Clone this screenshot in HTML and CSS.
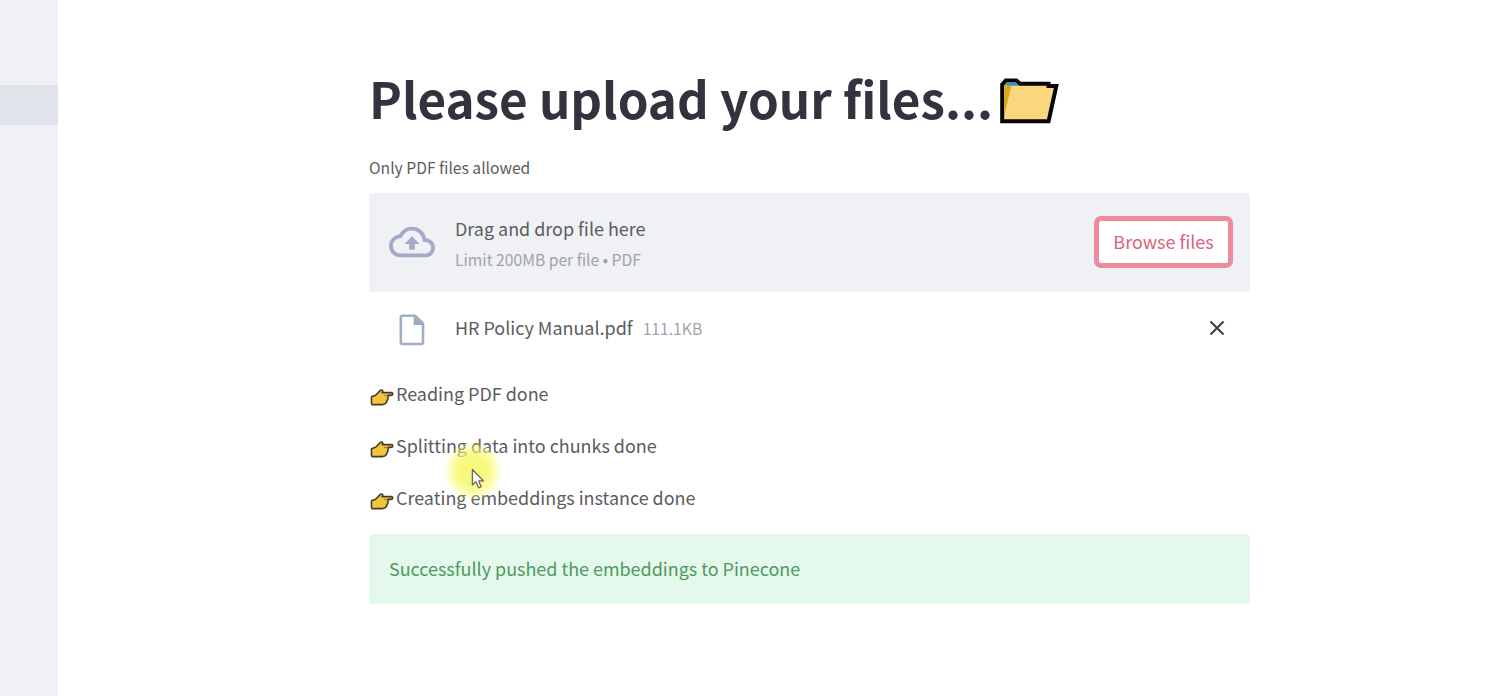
FILE: index.html
```html
<!DOCTYPE html>
<html lang="en">
<head>
<meta charset="utf-8">
<title>Please upload your files...</title>
<link rel="stylesheet" href="styles.css">
</head>
<body>
<svg class="defs" width="0" height="0" aria-hidden="true">
  <symbol id="hand" viewBox="0 0 24 18">
    <path d="M1.5 8.8 L5.6 7.2 L10.4 2.4 Q12.6 1.2 12.8 3.2 L12.2 4.6 H21.4 Q22.9 4.8 22.7 6 Q22.5 7.2 21 7.4 H18 Q18.6 8.8 17.8 10 Q18.2 11.6 17 12.6 Q16.8 15 14.8 15.9 L12.6 16.6 H2.3 L1.5 15.8 Z" fill="#f3c43c" stroke="#443b2b" stroke-width="1.6" stroke-linejoin="round"/>
    <path d="M14 7.6 H17.4" stroke="#8c6a22" stroke-width=".8" fill="none"/>
  </symbol>
</svg>
<aside class="sidebar"><div class="nav-active"></div></aside>
<main class="content">
  <h1 class="title"><span class="title-text">Please upload your files...</span><svg class="folder" width="60" height="48" viewBox="0 0 60 48">
    <path d="M3.2 44.3 V7.6 L6.8 3.6 H17.5 L20.8 6.8 H49.5 V9 H57.3 L49.6 44.3 Z" fill="#fad67c" stroke="#050505" stroke-width="4" stroke-linejoin="miter"/>
    <path d="M7.6 5.2 H17 L18.8 8.8 H6.4 Z" fill="#3b8fc9"/>
    <path d="M5.2 8.8 H12.5 L5.2 38 Z" fill="#dca51d"/>
  </svg></h1>
  <div class="label">Only PDF files allowed</div>
  <section class="dropzone">
    <svg class="cloud" width="46" height="46" viewBox="0 0 24 24"><path fill="#a1abc8" d="M19.35 10.04A7.49 7.49 0 0012 4C9.11 4 6.6 5.64 5.35 8.04A5.994 5.994 0 000 14c0 3.31 2.69 6 6 6h13c2.76 0 5-2.24 5-5 0-2.64-2.05-4.78-4.65-4.96zM19 18H6c-2.21 0-4-1.79-4-4 0-2.05 1.53-3.76 3.56-3.97l1.07-.11.5-.95A5.469 5.469 0 0112 6c2.62 0 4.88 1.86 5.39 4.43l.3 1.5 1.53.11A2.98 2.98 0 0122 15c0 1.65-1.35 3-3 3zM8 13h2.55v3h2.9v-3H16l-4-4z"/></svg>
    <div class="drop-copy">
      <span class="drop-title">Drag and drop file here</span>
      <span class="drop-limit">Limit 200MB per file • PDF</span>
    </div>
    <button class="browse" type="button"><span>Browse files</span></button>
  </section>
  <div class="file">
    <svg class="file-icon" width="26" height="32" viewBox="0 0 26 32"><path d="M3 1.8 H16 L24 9.5 V28.6 Q24 30 22.4 30 H3.4 Q1.8 30 1.8 28.6 V3 Q1.8 1.8 3 1.8 Z" fill="none" stroke="#a1adc6" stroke-width="2.6" stroke-linejoin="round"/><path d="M14.6 2 V11 H24 Z" fill="#9aabc0"/></svg>
    <span class="file-name">HR Policy Manual.pdf</span>
    <span class="file-size">111.1KB</span>
    <svg class="close" width="16" height="16" viewBox="0 0 16 16"><path d="M1.5 1.5 L14.5 14.5 M14.5 1.5 L1.5 14.5" stroke="#404148" stroke-width="2.2"/></svg>
  </div>
  <div class="steps">
    <p class="step"><svg class="hand" width="24" height="18"><use href="#hand"/></svg><span>Reading PDF done</span></p>
    <p class="step"><svg class="hand" width="24" height="18"><use href="#hand"/></svg><span>Splitting data into chunks done</span></p>
    <p class="step"><svg class="hand" width="24" height="18"><use href="#hand"/></svg><span>Creating embeddings instance done</span></p>
  </div>
  <div class="success"><span>Successfully pushed the embeddings to Pinecone</span></div>
</main>
<div class="halo"></div>
<svg class="cursor" width="14" height="22" viewBox="0 0 14 22"><path d="M1.4 1.5 V17 L5 13.8 L7.6 19.8 L10.2 18.7 L7.8 12.9 H12.4 Z" fill="#fff" stroke="#6b6858" stroke-width="1.3" stroke-linejoin="round"/></svg>
</body>
</html>
```
FILE: styles.css
```css
* { box-sizing: border-box; }
body {
  margin: 0;
  height: 696px;
  overflow: hidden;
  display: flex;
  background: #fff;
  color: #5b5c60;
  font-family: "Noto Sans CJK JP", "Open Sans", sans-serif;
  font-size: 17.94px;
  line-height: 26px;
  white-space: nowrap;
}
.defs { display: none; }
svg { display: block; flex: none; }
.sidebar { width: 58px; flex: none; padding-top: 85px; background: #eff1f6; }
.nav-active { height: 40px; background: #e0e3ea; }
.content { width: 881px; margin-left: 311px; padding-top: 66px; }
.title {
  margin: 0;
  height: 70px;
  display: flex;
  align-items: center;
  color: #33333f;
  font-size: 49.35px;
  line-height: 64px;
  font-weight: 700;
}
.title-text { width: 630px; padding-bottom: 6px; }
.label { height: 24px; margin-top: 20px; font-size: 15.65px; line-height: 24px; }
.dropzone {
  height: 99px;
  margin-top: 13px;
  padding: 0 17px 0 20px;
  display: flex;
  align-items: center;
  background: #eff1f5;
  border-radius: 4px;
}
.cloud { margin-bottom: 2px; }
.drop-copy { display: flex; flex-direction: column; gap: 6px; margin-left: 20px; padding-top: 3px; }
.drop-limit { color: #a0a2a7; font-size: 15.68px; }
.browse {
  width: 139px;
  height: 52px;
  margin: 0 0 2px auto;
  padding: 0 0 2px;
  border: 5px solid #eb8b9b;
  border-radius: 7px;
  background: #fff;
  color: #d8647b;
  font: inherit;
}
.file { height: 72px; padding: 0 25px 0 30px; display: flex; align-items: center; }
.file-icon { margin-top: 4px; }
.file-name { margin-left: 30px; padding-bottom: 2px; }
.file-size { margin-left: 10px; padding-top: 1px; color: #a4a5aa; font-size: 15.7px; }
.close { margin-left: auto; }
.steps { display: flex; flex-direction: column; gap: 26px; padding-top: 17px; }
.step { height: 26px; margin: 0; display: flex; align-items: center; gap: 2px; padding-left: 1px; }
.step span { padding-bottom: 2px; }
.hand { margin-top: 6px; }
.success {
  height: 70px;
  margin-top: 23px;
  padding: 0 20px 2px;
  display: flex;
  align-items: center;
  border-radius: 4px;
  background: #e4f8eb;
  color: #4d9a62;
}
.halo {
  position: absolute;
  left: 442px;
  top: 440px;
  width: 62px;
  height: 62px;
  border-radius: 50%;
  background: radial-gradient(closest-side, rgba(246, 248, 105, .85) 0 45%, rgba(249, 251, 120, .55) 72%, rgba(255, 255, 170, 0) 96%);
}
.cursor { position: absolute; left: 471px; top: 468px; }
```
